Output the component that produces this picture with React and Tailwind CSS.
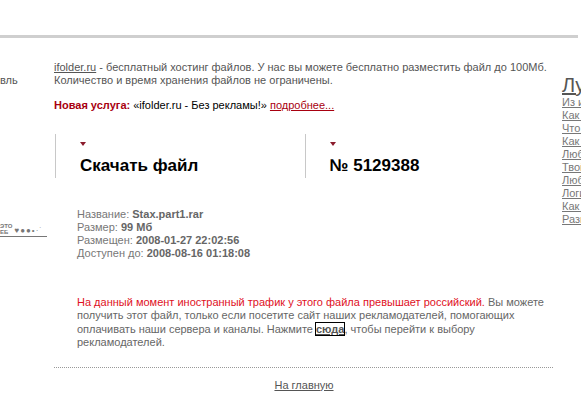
import React from "react";

const sideLinks = [
  "Из истории файлообмена",
  "Как скачать быстрее",
  "Что такое хостинг",
  "Как залить файл",
  "Любимые сервисы",
  "Твой файл онлайн",
  "Любая музыка",
  "Логин и пароль",
  "Как удалить файл",
  "Разное",
];

function Marker() {
  return (
    <svg width="6" height="5" viewBox="0 0 6 5" className="block">
      <path d="M0 0h6L3 4z" fill="#8a1b2c" />
    </svg>
  );
}

function TitleBox({ children }) {
  return (
    <div className="w-[250px] h-[44px] border-l border-[#c8c8c8] pl-[24px] pt-[8px]">
      <Marker />
      <div className="mt-[9px] text-[17px] leading-[20px] font-bold text-black font-['Liberation_Sans',Arial,sans-serif]">
        {children}
      </div>
    </div>
  );
}

export default function App() {
  return (
    <div className="w-[581px] h-[399px] overflow-hidden bg-white text-[11px] leading-[13px] text-[#666] font-['Liberation_Sans',Arial,sans-serif]">
      <div className="h-[35px]" />
      <div className="w-[578px] h-[3px] bg-[#cfcfcf]" />

      <div className="flex">
        {/* left edge, cut off */}
        <div className="w-[54px] shrink-0 overflow-hidden">
          <div className="mt-[36px] text-[#555] whitespace-nowrap">вль</div>
          <div className="mt-[136px] w-[47px] border-b border-[#777] flex items-end gap-[2px] pb-[1px] text-[#777]">
            <span className="text-[6px] leading-[6px] font-bold">ЭТО<br />ЕБ</span>
            <span className="text-[8px] leading-[8px] tracking-[1px]">♥●●•·˙</span>
          </div>
        </div>

        {/* main column */}
        <div className="w-[500px] shrink-0">
          <p className="mt-[23px] text-[#555]">
            <a className="underline text-[#555]">ifolder.ru</a> - бесплатный хостинг файлов. У нас вы можете бесплатно разместить файл до 100Мб.
            <br />
            Количество и время хранения файлов не ограничены.
          </p>
          <p className="mt-[12px] text-black">
            <b className="text-[#a8000f]">Новая услуга:</b> «ifolder.ru - Без рекламы!»{" "}
            <a className="underline text-[#a8000f]">подробнее...</a>
          </p>

          <div className="mt-[22px] flex ml-[1px]">
            <TitleBox>Скачать файл</TitleBox>
            <TitleBox>№ 5129388</TitleBox>
          </div>

          <div className="mt-[30px] ml-[23px] text-[#777]">
            <div>Название: <b className="text-[#666]">Stax.part1.rar</b></div>
            <div>Размер: <b className="text-[#666]">99 Мб</b></div>
            <div>Размещен: <b className="text-[#666]">2008-01-27 22:02:56</b></div>
            <div>Доступен до: <b className="text-[#666]">2008-08-16 01:18:08</b></div>
          </div>

          <p className="mt-[36px] ml-[23px] w-[470px] leading-[13.4px] text-[#666]">
            <span className="text-[#e0101e]">На данный момент иностранный трафик у этого файла превышает российский.</span>{" "}
            Вы можете получить этот файл, только если посетите сайт наших рекламодателей, помогающих оплачивать наши сервера и каналы. Нажмите{" "}
            <a className="underline font-bold text-[#555] outline outline-1 outline-black">сюда</a>, чтобы перейти к выбору рекламодателей.
          </p>

          <div className="mt-[17px] w-[499px] border-t border-dotted border-[#999]" />

          <div className="mt-[11px] text-center">
            <a className="underline text-[#555]">На главную</a>
          </div>
        </div>

        {/* right sidebar, cut off */}
        <div className="ml-[8px] shrink-0 whitespace-nowrap">
          <div className="mt-[36px] text-[20px] leading-[22px] underline text-[#555]">Лучшие статьи</div>
          <ul className="text-[#777]">
            {sideLinks.map((t) => (
              <li key={t} className="underline">{t}</li>
            ))}
          </ul>
        </div>
      </div>
    </div>
  );
}
